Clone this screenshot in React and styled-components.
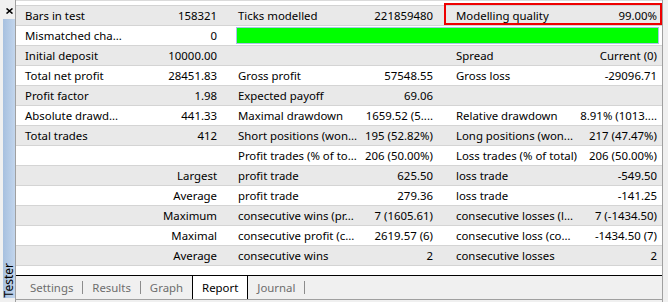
import { Fragment } from 'react';
import styled, { createGlobalStyle } from 'styled-components';

const GlobalStyle = createGlobalStyle`
  body {
    margin: 0;
    background: #f0f0f0;
    font-family: "Segoe UI", "Noto Sans", sans-serif;
    font-size: 11.4px;
    color: #000;
  }
`;

const Window = styled.div`
  display: flex;
  width: 668px;
  height: 302px;
  overflow: hidden;
`;

const Sidebar = styled.div`
  width: 16px;
  border-right: 1px solid #a0a0a0;
  display: flex;
  flex-direction: column;
  padding-top: 8px;
  box-sizing: border-box;
`;

const CloseIcon = styled.svg`
  display: block;
  margin-left: 6px;
  width: 7px;
  height: 6px;
`;

const DockBar = styled.div`
  flex: 1;
  margin: 5px 0 4px 3px;
  width: 12px;
  background: linear-gradient(to right, #a7c0df, #c2d5ec);
  display: flex;
  flex-direction: column;
  justify-content: flex-end;
  align-items: center;
`;

const DockTitle = styled.span`
  writing-mode: vertical-rl;
  transform: rotate(180deg);
  font-size: 12px;
  line-height: 12px;
  padding-top: 1px;
`;

const Main = styled.div`
  width: 647px;
  border-right: 1px solid #a0a0a0;
  box-sizing: border-box;
  display: flex;
  flex-direction: column;
`;

const Table = styled.div`
  position: relative;
  height: 275px;
  background: #fff;
`;

const TopEdge = styled.div`
  height: 6px;
  box-sizing: border-box;
  border-top: 1px solid #dadada;
  border-bottom: 1px solid #d2d2d2;
`;

const Row = styled.div`
  display: grid;
  grid-template-columns: 109px 105px 131px 86px 131px 84px;
  height: 20px;
  box-sizing: border-box;
  border-bottom: 1px solid #d4d4d4;
  background: ${(p) => (p.$alt ? '#e9e9e9' : '#fff')};
`;

const Cell = styled.div`
  display: flex;
  align-items: center;
  justify-content: ${(p) => (p.$right ? 'flex-end' : 'flex-start')};
  padding: 0 ${(p) => p.$pr ?? 4}px 0 ${(p) => p.$pl ?? 9}px;
  white-space: nowrap;
  overflow: hidden;
`;

const BarCell = styled.div`
  grid-column: 3 / span 4;
  padding: 1px 3px 1px 6px;
  display: flex;
`;

const QualityBar = styled.div`
  flex: 1;
  background: #00ff00;
  border: 1px solid #a6c4e6;
`;

const Highlight = styled.div`
  position: absolute;
  left: 428px;
  top: 3px;
  width: 218px;
  height: 22px;
  box-sizing: border-box;
  border: 2px solid #ee0000;
  pointer-events: none;
`;

const TabStrip = styled.div`
  display: flex;
  height: 25px;
  box-sizing: border-box;
  border-top: 1px solid #000;
  border-bottom: 1px solid #a0a0a0;
  padding-left: 5px;
`;

const Tab = styled.div`
  display: flex;
  align-items: center;
  padding: 0 9px 1px;
  color: ${(p) => (p.$active ? '#000' : '#6d6d6d')};
  background: ${(p) => (p.$active ? '#fff' : 'transparent')};
  border-left: ${(p) => (p.$active ? '1px solid #000' : 'none')};
  border-right: ${(p) => (p.$active ? '1px solid #000' : 'none')};
`;

const TabSep = styled.div`
  width: 1px;
  height: 13px;
  align-self: center;
  background: #8c8c8c;
`;

const rows = [
  ['Bars in test', '158321', 'Ticks modelled', '221859480', 'Modelling quality', '99.00%'],
  ['Mismatched cha...', '0', null],
  ['Initial deposit', '10000.00', '', '', 'Spread', 'Current (0)'],
  ['Total net profit', '28451.83', 'Gross profit', '57548.55', 'Gross loss', '-29096.71'],
  ['Profit factor', '1.98', 'Expected payoff', '69.06', '', ''],
  ['Absolute drawd...', '441.33', 'Maximal drawdown', '1659.52 (5....', 'Relative drawdown', '8.91% (1013....'],
  ['Total trades', '412', 'Short positions (won...', '195 (52.82%)', 'Long positions (won...', '217 (47.47%)'],
  ['', '', 'Profit trades (% of to...', '206 (50.00%)', 'Loss trades (% of total)', '206 (50.00%)'],
  ['', 'Largest', 'profit trade', '625.50', 'loss trade', '-549.50'],
  ['', 'Average', 'profit trade', '279.36', 'loss trade', '-141.25'],
  ['', 'Maximum', 'consecutive wins (pr...', '7 (1605.61)', 'consecutive losses (l...', '7 (-1434.50)'],
  ['', 'Maximal', 'consecutive profit (c...', '2619.57 (6)', 'consecutive loss (co...', '-1434.50 (7)'],
  ['', 'Average', 'consecutive wins', '2', 'consecutive losses', '2'],
];

const valuePad = [13, 14, 5];

const tabs = ['Settings', 'Results', 'Graph', 'Report', 'Journal'];

export default function App() {
  return (
    <>
      <GlobalStyle />
      <Window>
        <Sidebar>
          <CloseIcon viewBox="0 0 7 6">
            <path d="M0.5 0.5 L6.5 5.5 M6.5 0.5 L0.5 5.5" stroke="#000" strokeWidth="1.6" />
          </CloseIcon>
          <DockBar>
            <DockTitle>Tester</DockTitle>
          </DockBar>
        </Sidebar>
        <Main>
          <Table>
            <TopEdge />
            {rows.map((r, i) => (
              <Row key={i} $alt={i % 2 === 0}>
                <Cell>{r[0]}</Cell>
                <Cell $right $pr={valuePad[0]}>{r[1]}</Cell>
                {r[2] === null ? (
                  <BarCell>
                    <QualityBar />
                  </BarCell>
                ) : (
                  <>
                    <Cell $pl={8}>{r[2]}</Cell>
                    <Cell $right $pr={valuePad[1]}>{r[3]}</Cell>
                    <Cell>{r[4]}</Cell>
                    <Cell $right $pr={valuePad[2]}>{r[5]}</Cell>
                  </>
                )}
              </Row>
            ))}
            <Highlight />
          </Table>
          <TabStrip>
            {tabs.map((t) => (
              <Fragment key={t}>
                <Tab $active={t === 'Report'}>{t}</Tab>
                {t !== 'Graph' && t !== 'Report' && <TabSep />}
              </Fragment>
            ))}
          </TabStrip>
        </Main>
      </Window>
    </>
  );
}
